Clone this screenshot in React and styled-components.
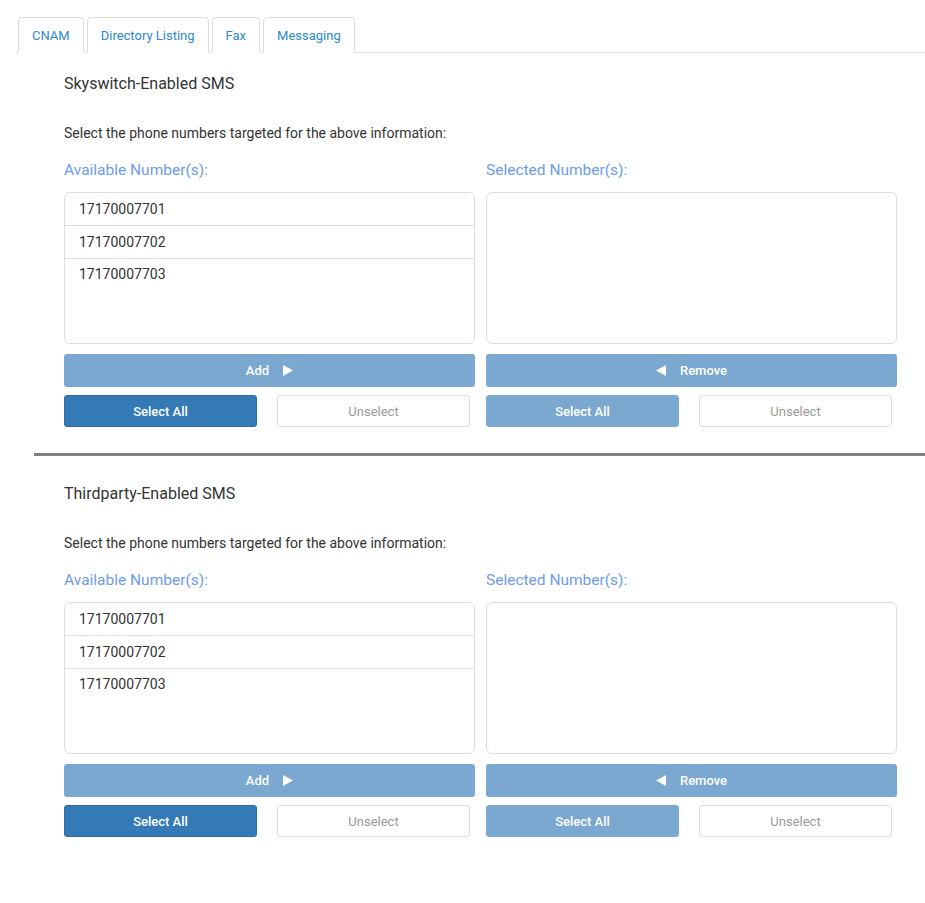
import React from 'react'
import styled, { createGlobalStyle } from 'styled-components';

const GlobalStyle = createGlobalStyle`
    body {
        margin: 0;
        background: #fff;
        font-family: Roboto, "Liberation Sans", sans-serif;
        color: #333;
    }
`;

const Page = styled.div`
    padding: 17px 0 40px 16px;
`;

const TabBar = styled.ul`
    display: flex;
    gap: 3px;
    list-style: none;
    margin: 0;
    padding: 0 0 0 2px;
    border-bottom: 1px solid #ddd;
`;

const Tab = styled.li`
    height: 36px;
    box-sizing: border-box;
    display: flex;
    align-items: center;
    padding: 0 13px;
    font-size: 13px;
    color: #2b8ad3;
    border: 1px solid #ddd;
    border-bottom-color: ${props => props.active ? '#fff' : 'transparent'};
    border-radius: 4px 4px 0 0;
    margin-bottom: -1px;
    background: #fff;
`;

const Section = styled.div`
    padding: ${props => props.first ? '21px' : '28px'} 29px 0 48px;
`;

const Title = styled.div`
    font-size: 16px;
    line-height: 20px;
    color: #333;
`;

const Hint = styled.div`
    margin-top: 30px;
    font-size: 14px;
    line-height: 18px;
    color: #333;
`;

const Columns = styled.div`
    display: grid;
    grid-template-columns: 411px 411px;
    column-gap: 11px;
    margin-top: 18px;
`;

const Column = styled.div`
    display: flex;
    flex-direction: column;
`;

const Label = styled.div`
    font-size: 15.5px;
    line-height: 20px;
    color: #6e9ce9;
    margin-bottom: 12px;
`;

const ListBox = styled.div`
    height: 152px;
    box-sizing: border-box;
    border: 1px solid #ddd;
    border-radius: 6px;
    overflow: hidden;
`;

const Row = styled.div`
    height: 33px;
    box-sizing: border-box;
    display: flex;
    padding-left: 14px;
    font-size: 14px;
    color: #333;
    border-bottom: ${props => props.last ? 'none' : '1px solid #ddd'};
    align-items: ${props => props.last ? 'flex-start' : 'center'};
    padding-top: ${props => props.last ? '7px' : '0'};
`;

const MoveButton = styled.button`
    margin-top: 10px;
    height: 33px;
    border: none;
    border-radius: 3px;
    background: #7aa8d0;
    color: #fff;
    font-family: inherit;
    font-size: 13px;
    font-weight: 500;
    display: flex;
    align-items: center;
    justify-content: center;
    gap: 14px;
`;

const ButtonRow = styled.div`
    display: grid;
    grid-template-columns: 193px 193px;
    column-gap: 20px;
    margin-top: 8px;
`;

const SelectButton = styled.button`
    height: 32px;
    border: 1px solid ${props => props.dim ? '#7aa8d0' : '#2e6da4'};
    border-radius: 3px;
    background: ${props => props.dim ? '#7aa8d0' : '#337ab7'};
    color: #fff;
    font-family: inherit;
    font-size: 13px;
    font-weight: 500;
`;

const UnselectButton = styled.button`
    height: 32px;
    border: 1px solid #dedede;
    border-radius: 3px;
    background: #fff;
    color: #999;
    font-family: inherit;
    font-size: 13px;
`;

const Divider = styled.hr`
    margin: 26px 0 0 18px;
    border: none;
    height: 3px;
    background: #808080;
`;

const Arrow = ({ dir }) => (
    <svg width="10" height="11" viewBox="0 0 10 11">
        {dir === 'right'
            ? <polygon points="0,0 10,5.5 0,11" fill="#fff" />
            : <polygon points="10,0 0,5.5 10,11" fill="#fff" />}
    </svg>
);

const numbers = ['17170007701', '17170007702', '17170007703'];

const NumberPicker = ({ title, first }) => {
    return (
        <Section first={first}>
            <Title>{title}</Title>
            <Hint>Select the phone numbers targeted for the above information:</Hint>
            <Columns>
                <Column>
                    <Label>Available Number(s):</Label>
                    <ListBox>
                        {numbers.map((n, i) => (
                            <Row key={n} last={i === numbers.length - 1}>{n}</Row>
                        ))}
                    </ListBox>
                    <MoveButton>Add <Arrow dir="right" /></MoveButton>
                    <ButtonRow>
                        <SelectButton>Select All</SelectButton>
                        <UnselectButton>Unselect</UnselectButton>
                    </ButtonRow>
                </Column>
                <Column>
                    <Label>Selected Number(s):</Label>
                    <ListBox />
                    <MoveButton><Arrow dir="left" /> Remove</MoveButton>
                    <ButtonRow>
                        <SelectButton dim>Select All</SelectButton>
                        <UnselectButton>Unselect</UnselectButton>
                    </ButtonRow>
                </Column>
            </Columns>
        </Section>
    );
}

const App = () => {
    const tabs = ['CNAM', 'Directory Listing', 'Fax', 'Messaging'];
    return (
        <Page>
            <GlobalStyle />
            <TabBar>
                {tabs.map(t => (
                    <Tab key={t} active={t === 'Messaging'}>{t}</Tab>
                ))}
            </TabBar>
            <NumberPicker first title="Skyswitch-Enabled SMS" />
            <Divider />
            <NumberPicker title="Thirdparty-Enabled SMS" />
        </Page>
    );
}

export default App;
